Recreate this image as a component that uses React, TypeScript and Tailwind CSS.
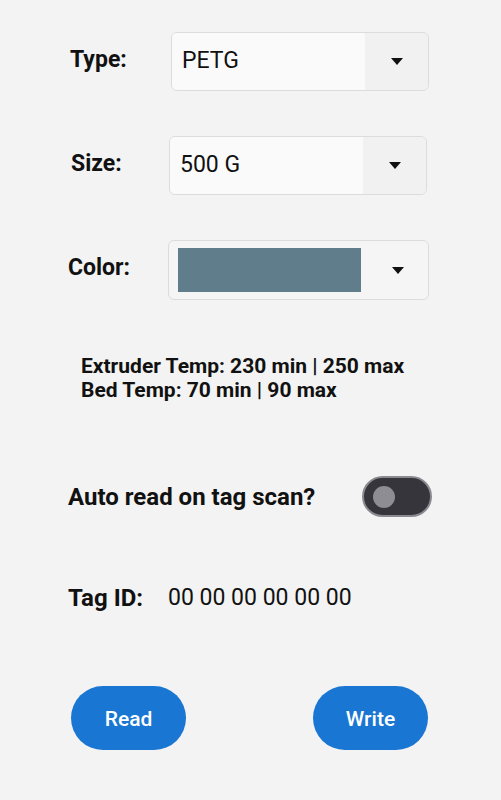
import React from 'react';

const Arrow: React.FC = () => (
  <svg width="12" height="7" viewBox="0 0 12 7" className="block">
    <path d="M0 0 L12 0 L6 7 Z" fill="#111" />
  </svg>
);

const SelectBox: React.FC<{ children: React.ReactNode; className?: string }> = ({ children, className = '' }) => (
  <div className={`flex h-[59px] rounded-[6px] border border-[#dcdcdc] overflow-hidden ${className}`}>
    <div className="flex-1 flex items-center pl-[10px] bg-[#fafafa] text-[23px] text-[#111]">{children}</div>
    <div className="w-[63px] flex items-center justify-center bg-[#f1f1f1]">
      <Arrow />
    </div>
  </div>
);

export default function App() {
  return (
    <div
      className="w-[501px] h-[800px] bg-[#f3f3f3] text-[#111] overflow-hidden"
      style={{ fontFamily: 'Roboto, "Liberation Sans", sans-serif' }}
    >
      {/* Type */}
      <div className="flex items-center pt-[32px]">
        <span className="w-[101px] ml-[70px] -mt-[3px] text-[23px] font-bold">Type:</span>
        <SelectBox className="w-[258px]">PETG</SelectBox>
      </div>

      {/* Size */}
      <div className="flex items-center mt-[45px]">
        <span className="w-[98px] ml-[71px] -mt-[3px] text-[23px] font-bold">Size:</span>
        <SelectBox className="w-[258px]">500 G</SelectBox>
      </div>

      {/* Color */}
      <div className="flex items-center mt-[45px]">
        <span className="w-[100px] ml-[68px] -mt-[4px] text-[23px] font-bold">Color:</span>
        <div className="w-[261px] h-[60px] flex items-center rounded-[6px] border border-[#dcdcdc] bg-[#f5f5f5]">
          <div className="ml-[9px] w-[183px] h-[44px] bg-[#607d8b]" />
          <div className="flex-1 flex justify-center pl-[6px]">
            <Arrow />
          </div>
        </div>
      </div>

      {/* Temps */}
      <div className="mt-[54px] ml-[81px] text-[21px] font-bold leading-[24px]">
        <div>Extruder Temp: 230 min | 250 max</div>
        <div>Bed Temp: 70 min | 90 max</div>
      </div>

      {/* Auto read */}
      <div className="flex items-center justify-between mt-[74px] ml-[68px] mr-[69px]">
        <span className="text-[24px] font-bold">Auto read on tag scan?</span>
        <div className="w-[70px] h-[41px] rounded-full bg-[#36353b] border-2 border-[#8b8a90] flex items-center pl-[9px]">
          <div className="w-[22px] h-[22px] rounded-full bg-[#8e8d93]" />
        </div>
      </div>

      {/* Tag ID */}
      <div className="flex items-center mt-[67px] ml-[68px] h-[28px]">
        <span className="w-[100px] text-[24px] font-bold">Tag ID:</span>
        <span className="text-[23px]">00 00 00 00 00 00</span>
      </div>

      {/* Buttons */}
      <div className="flex justify-between mt-[74px] ml-[71px] mr-[73px]">
        <button className="w-[115px] h-[64px] rounded-full bg-[#1976d2] text-white text-[21px] font-medium pt-[3px]">
          Read
        </button>
        <button className="w-[115px] h-[64px] rounded-full bg-[#1976d2] text-white text-[21px] font-medium pt-[3px]">
          Write
        </button>
      </div>
    </div>
  );
}
